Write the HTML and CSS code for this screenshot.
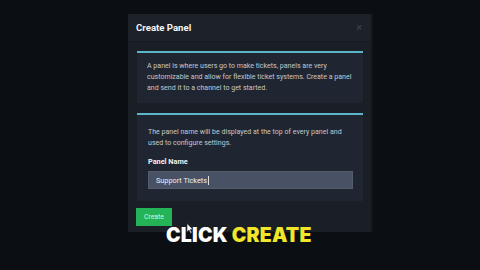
FILE: index.html
```html
<!DOCTYPE html>
<html>
<head>
<meta charset="utf-8">
<link rel="stylesheet" href="styles.css">
</head>
<body>
<div class="stage">
  <div class="modal">
    <div class="modal-header">
      <span class="title">Create Panel</span>
      <span class="close">×</span>
    </div>
    <div class="modal-body">
      <div class="card card-intro">
        <p>A panel is where users go to make tickets, panels are very customizable and allow for flexible ticket systems. Create a panel and send it to a channel to get started.</p>
      </div>
      <div class="card card-form">
        <p>The panel name will be displayed at the top of every panel and used to configure settings.</p>
        <label class="label">Panel Name</label>
        <div class="input">Support Tickets<span class="caret"></span></div>
      </div>
      <div class="actions">
        <button class="btn">Create</button>
      </div>
    </div>
  </div>
  <div class="caption"><span class="w">CLICK</span> <span class="y">CREATE</span></div>
  <svg class="cursor" width="8" height="11" viewBox="0 0 8 11"><path d="M1 0.5 L1 9 L3 7 L4.6 10.4 L5.8 9.8 L4.3 6.6 L7 6.4 Z" fill="#fff" stroke="#222" stroke-width="0.6"/></svg>
</div>
</body>
</html>
```

FILE: styles.css
```css
html, body {
  margin: 0;
  padding: 0;
}
body {
  width: 480px;
  height: 270px;
  background: #0b0e12;
  overflow: hidden;
  font-family: Roboto, "Liberation Sans", sans-serif;
}
.stage {
  position: relative;
  width: 480px;
  height: 270px;
  padding: 14px 0 0 128px;
  box-sizing: border-box;
}
.modal {
  width: 243px;
  height: 218px;
  background: #1a1f26;
  box-shadow: 2px 0 0 #12161b;
  display: flex;
  flex-direction: column;
}
.modal-header {
  height: 27px;
  display: flex;
  align-items: center;
  justify-content: space-between;
  padding: 0 9px 0 8px;
  background: #1d2229;
  border-bottom: 1px solid #161a20;
}
.title {
  color: #f2f4f6;
  font-size: 9.6px;
  font-weight: 700;
}
.close {
  color: #3e454e;
  font-size: 11px;
}
.modal-body {
  padding: 9px 8px 0 9px;
  display: flex;
  flex-direction: column;
}
.card {
  background: #1f2631;
  border-top: 2px solid #5bb6cb;
}
.card p {
  margin: 0;
  color: #c3c8cf;
  font-size: 7.05px;
  line-height: 11px;
}
.card-intro {
  padding: 7px 8px 10px 10px;
}
.card-form {
  margin-top: 10px;
  padding: 11px 10px 12px 11px;
  display: flex;
  flex-direction: column;
}
.label {
  margin-top: 9px;
  color: #eef0f2;
  font-size: 7.3px;
  font-weight: 700;
}
.input {
  margin-top: 5px;
  height: 18px;
  background: #485264;
  border: 1px solid #535d6e;
  box-sizing: border-box;
  color: #eef0f3;
  font-size: 7.3px;
  display: flex;
  align-items: center;
  padding-left: 7px;
}
.caret {
  width: 1px;
  height: 9px;
  background: #e0e0e0;
  margin-left: 0.5px;
}
.actions {
  margin-top: 3px;
  margin-left: -1px;
}
.btn {
  width: 36px;
  height: 18px;
  border: none;
  background: #24b457;
  color: #d8f3df;
  font-family: Roboto, "Liberation Sans", sans-serif;
  font-size: 6.8px;
  padding: 0;
}
.caption {
  position: absolute;
  left: 166px;
  top: 223px;
  font-family: Inter, "Liberation Sans", sans-serif;
  font-weight: 900;
  font-size: 19.5px;
  letter-spacing: 0.2px;
  line-height: 24px;
  white-space: nowrap;
}
.caption .w { color: #ffffff; }
.caption .y { color: #f3e62a; }
.cursor {
  position: absolute;
  left: 186px;
  top: 223px;
}
```
